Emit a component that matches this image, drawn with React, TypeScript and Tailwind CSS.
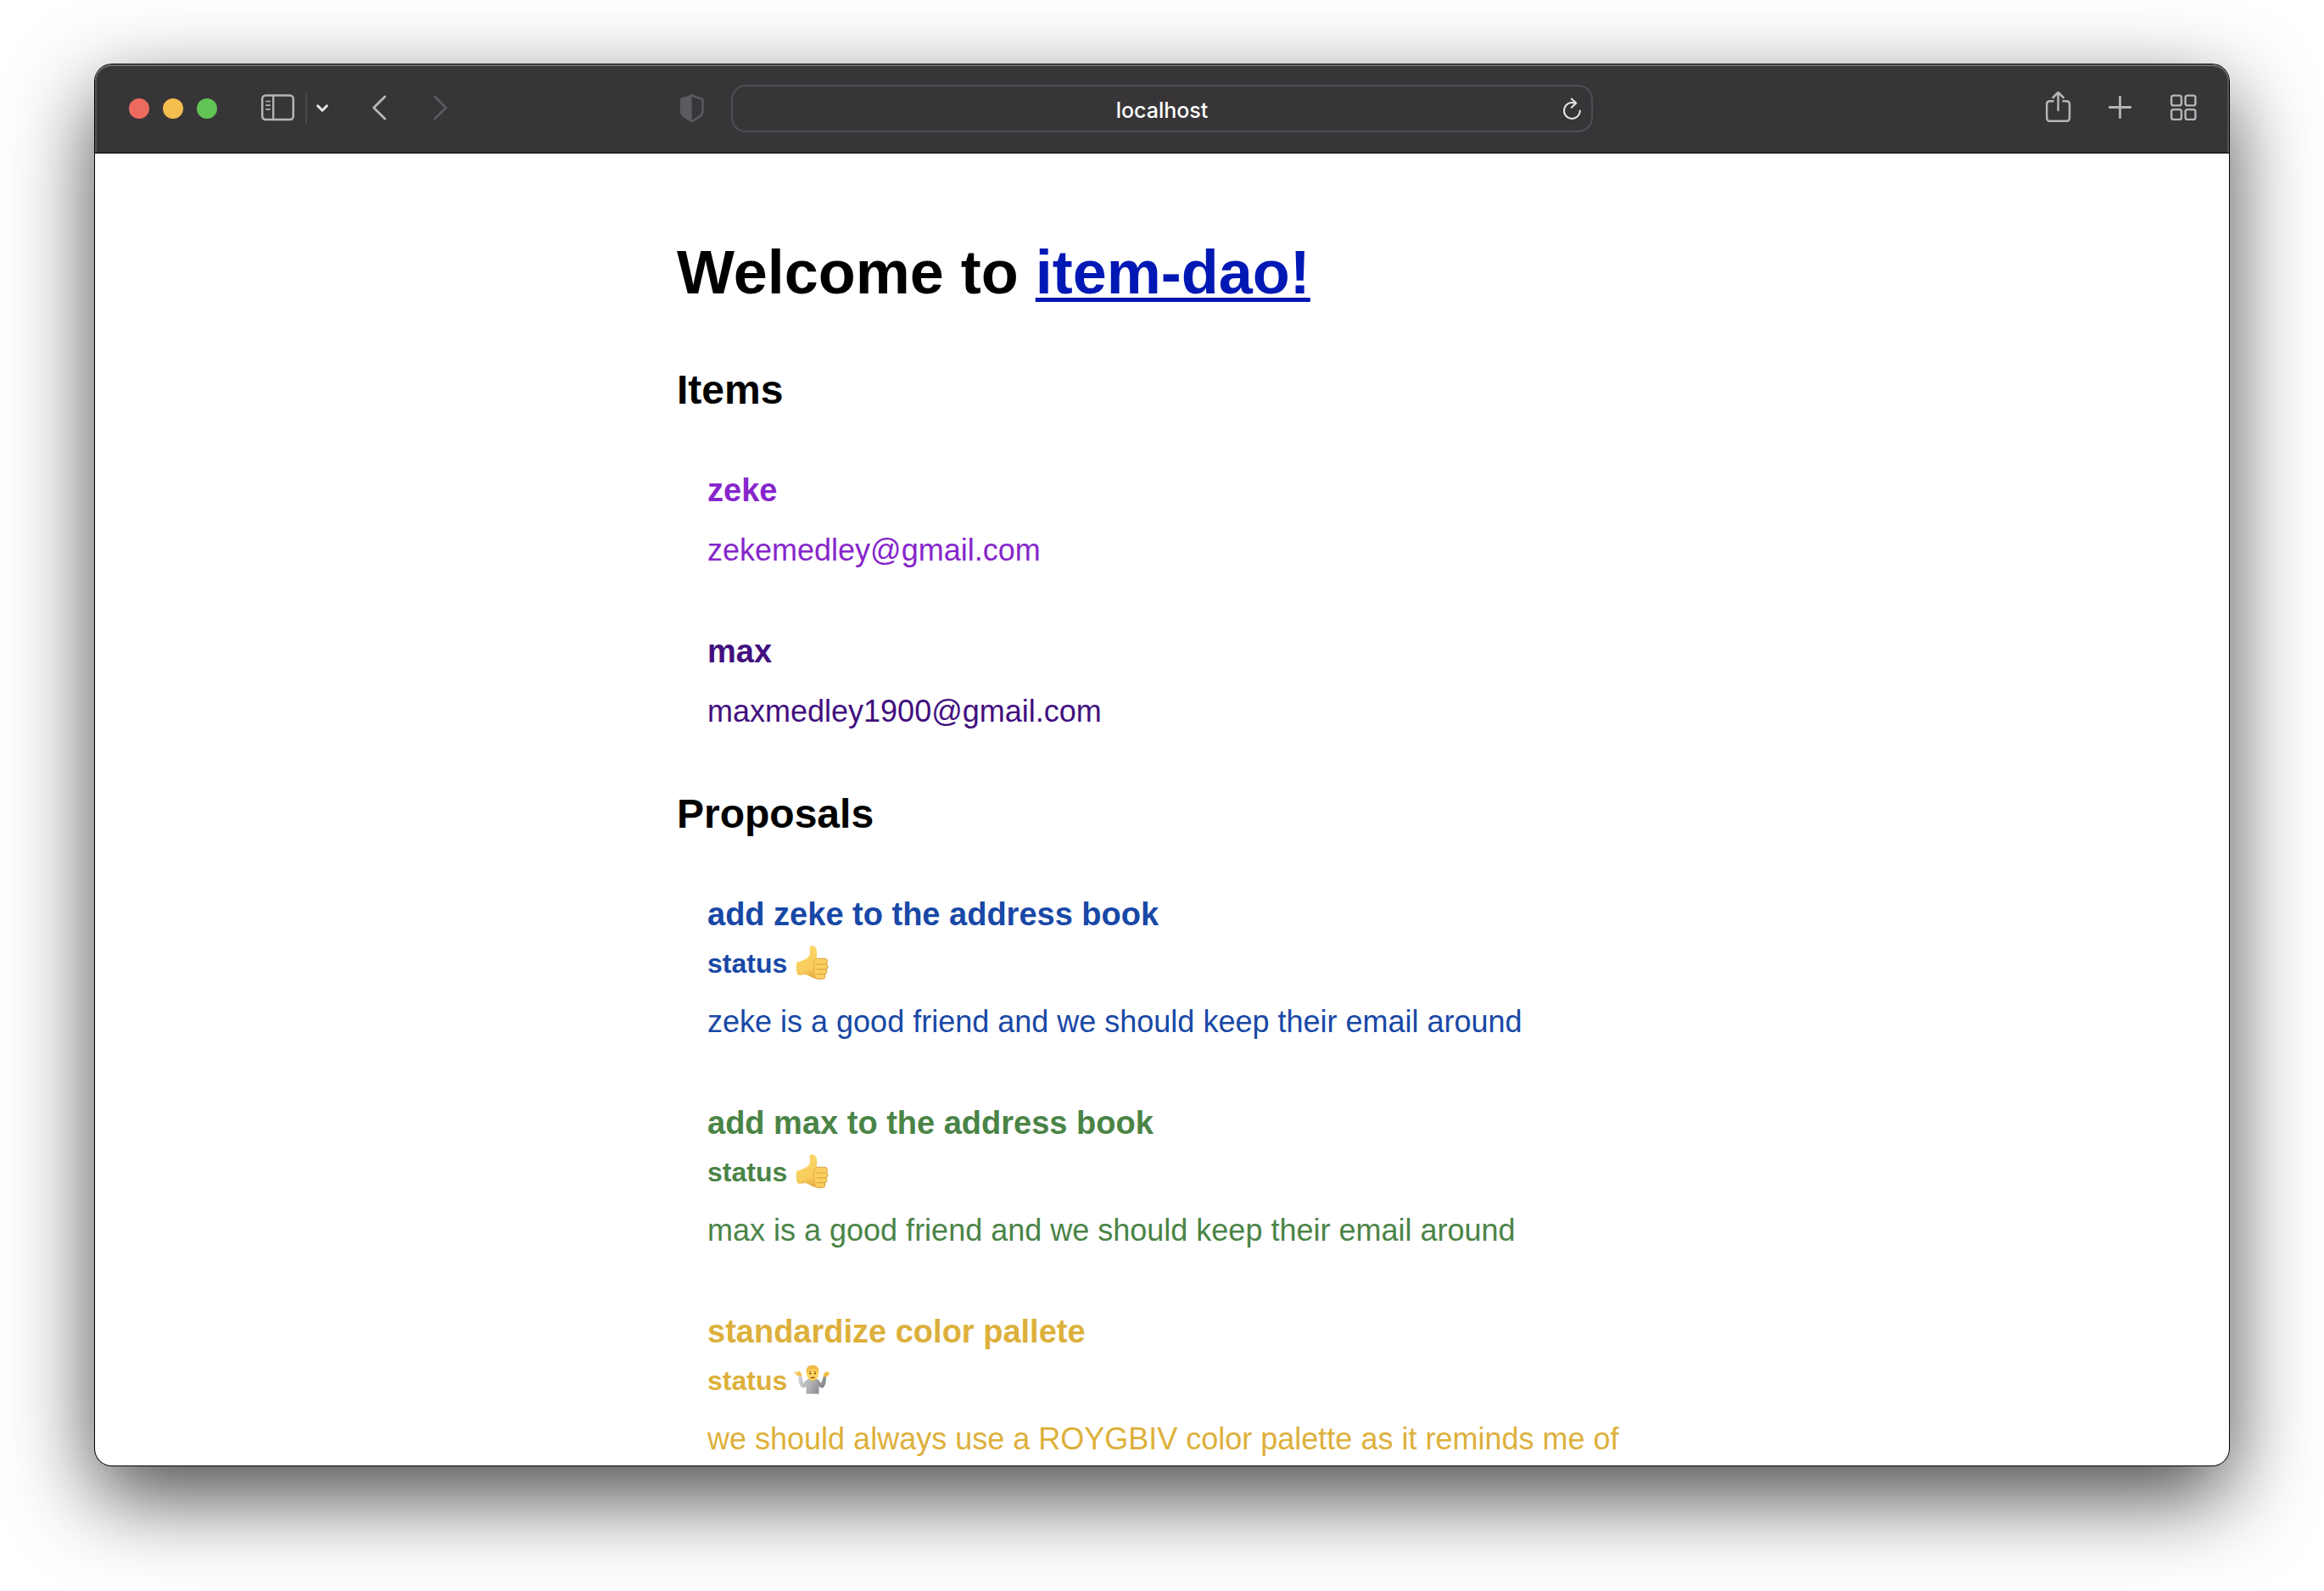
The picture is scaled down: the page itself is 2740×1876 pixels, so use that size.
import React from "react";

type Item = { name: string; detail: string; tone: string };
type Proposal = { title: string; status: "yes" | "unsure"; detail: string; tone: string };

const items: Item[] = [
  { name: "zeke", detail: "zekemedley@gmail.com", tone: "text-[#8626cc]" },
  { name: "max", detail: "maxmedley1900@gmail.com", tone: "text-[#420f7e]" },
];

const proposals: Proposal[] = [
  {
    title: "add zeke to the address book",
    status: "yes",
    detail: "zeke is a good friend and we should keep their email around",
    tone: "text-[#1848a6]",
  },
  {
    title: "add max to the address book",
    status: "yes",
    detail: "max is a good friend and we should keep their email around",
    tone: "text-[#4a8446]",
  },
  {
    title: "standardize color pallete",
    status: "unsure",
    detail: "we should always use a ROYGBIV color palette as it reminds me of",
    tone: "text-[#ddb03b]",
  },
];

function ThumbsUp() {
  return (
    <svg className="h-11 w-11" viewBox="0 0 44 44" role="img" aria-label="thumbs up">
      <defs>
        <linearGradient id="thumbSkin" x1="0" y1="0" x2="0.3" y2="1">
          <stop offset="0" stopColor="#fbd769" />
          <stop offset="0.75" stopColor="#f8cd5c" />
          <stop offset="1" stopColor="#e6ad45" />
        </linearGradient>
      </defs>
      <path
        d="M3.500 20.500C2.200 25 2.400 30.500 4 34.500C7 37.500 10 34.500 14 35C19 36.500 22 40.500 30 40.300L35 39.500L38 22L27 19.500C26.500 14 28 10 26.500 5C25.600 1.300 19.500 -0.200 18.600 3C18.200 6 19.800 9 18.500 12C17 15.500 12.500 18.500 3.500 20.500Z"
        fill="url(#thumbSkin)"
      />
      <g fill="#f9cf60" stroke="#cf9838" strokeWidth="0.9">
        <rect x="24.500" y="33.800" width="12.500" height="6.500" rx="3.200" />
        <rect x="24" y="28.200" width="15" height="6.500" rx="3.200" />
        <rect x="24" y="22.200" width="16" height="6.800" rx="3.300" />
        <rect x="23.500" y="16.200" width="16" height="6.800" rx="3.300" />
      </g>
      <path d="M20.500 16.500C22 16 24 16 26.500 16.200L27 37.500C24 38 22.500 36.500 23 32.500Z" fill="#f9cf60" />
      <path d="M26 17.500C23.500 19 23 21 24 23.500C23 27 24 32 25 37" fill="none" stroke="#d9a33f" strokeWidth="0.9" />
    </svg>
  );
}

function Shrug() {
  return (
    <svg className="h-11 w-11" viewBox="0 -3 44 44" role="img" aria-label="person shrugging">
      <defs>
        <linearGradient id="shirt" x1="0" y1="0" x2="1" y2="0.300">
          <stop offset="0" stopColor="#d4d5d7" />
          <stop offset="0.500" stopColor="#b3b4b7" />
          <stop offset="1" stopColor="#85878a" />
        </linearGradient>
      </defs>
      <path
        d="M5.500 13.500L9 13C10 17 10.500 20 11.500 22C14 17.500 17 16.500 22 16.500C27 16.500 30 17.500 32 22C33 20 34 17 35 13.500L38 14C38 20 37 26 34 27.500C31.500 28 30.500 26.500 29.500 25.500L29.500 34.500H14.500L14.500 25.500C13 27.500 11.500 28 9.500 27C6 24.500 5 19 5.500 13.500Z"
        fill="url(#shirt)"
      />
      <path d="M5 13.500C2.500 12 1 10 1 8C2.500 8 3.500 10 5 10C5 8.500 4 7 5.300 7.100C7 9 9.500 10.500 9.500 13.500Z" fill="#f3bd45" />
      <path d="M34.500 14C34.500 11 36.500 9.500 39.500 7.800C40.500 8.500 39.500 9.200 38.800 9.800L41.500 9C42.500 10.500 40.500 14 38 14.500Z" fill="#f3bd45" />
      <path d="M18.500 15H25.500V18Q22 20.500 18.500 18Z" fill="#e5ab40" />
      <ellipse cx="22" cy="10.500" rx="7" ry="8.500" fill="#fcd45a" />
      <path d="M14.700 10C13.800 4 16.800 0.800 22 0.800C27.200 0.800 30.200 4 29.300 10L28.600 11C28.600 7.500 27.500 5.500 25 5C20.500 6 18 4.500 16.800 6.500C16 8 15.700 9.500 15.400 11Z" fill="#f2bb48" />
      <circle cx="19.300" cy="10.500" r="1" fill="#5a3517" />
      <circle cx="25" cy="10.500" r="1" fill="#5a3517" />
      <path d="M17.800 8.200L20.500 7.900M23.800 7.900L26.300 8.200" stroke="#9a6420" strokeWidth="0.800" />
      <path d="M20.300 15.700Q22.200 14.500 24 15.700" fill="none" stroke="#8e3f22" strokeWidth="1.400" strokeLinecap="round" />
    </svg>
  );
}

function Toolbar() {
  return (
    <header className="grid h-[105px] grid-cols-[1fr_1016px_1fr] items-center rounded-t-[20px] border-b border-black bg-[#373538] shadow-[inset_0_2px_0_#6b6b6c,inset_2px_0_0_#545355,inset_-2px_0_0_#545355]">
      <div className="flex items-center pr-[30px] pl-10">
        <div className="flex gap-4">
          <button aria-label="Close" className="size-6 rounded-full bg-[#ed6a5e]" />
          <button aria-label="Minimize" className="size-6 rounded-full bg-[#f5bd4f]" />
          <button aria-label="Zoom" className="size-6 rounded-full bg-[#61c454]" />
        </div>
        <button aria-label="Show sidebar" className="ml-12">
          <svg className="h-11 w-12" viewBox="0 0 48 44" fill="none" stroke="#b7b5b8" strokeLinecap="round">
            <rect x="5.200" y="6.500" width="36.600" height="28.600" rx="4" strokeWidth="2.500" />
            <path d="M18.200 7V35" strokeWidth="2.300" />
            <path d="M9.800 13.500H14.200M9.800 18.200H14.200M9.800 22.800H14.200" strokeWidth="1.700" />
          </svg>
        </button>
        <div className="ml-2 h-9 w-0.5 bg-[#4a484b]" />
        <button aria-label="Tab groups" className="ml-1.5">
          <svg className="h-11 w-6" viewBox="0 0 24 44" fill="none" stroke="#e4e3e5" strokeWidth="3" strokeLinecap="round" strokeLinejoin="round">
            <path d="M6.600 18.800L12 24.300L17.400 18.800" />
          </svg>
        </button>
        <button aria-label="Back" className="ml-10">
          <svg className="h-11 w-8" viewBox="0 0 32 44" fill="none" stroke="#b7b5b8" strokeWidth="2.800" strokeLinecap="round" strokeLinejoin="round">
            <path d="M21.800 8L8.600 21L21.800 34" />
          </svg>
        </button>
        <button aria-label="Forward" className="ml-10">
          <svg className="h-11 w-8" viewBox="0 0 32 44" fill="none" stroke="#5c5a5e" strokeWidth="2.800" strokeLinecap="round" strokeLinejoin="round">
            <path d="M8.600 8L21.800 21L8.600 34" />
          </svg>
        </button>
        <button aria-label="Privacy report" className="ml-auto">
          <svg className="h-11 w-8" viewBox="0 0 32 44" fill="none" stroke="#5c5a5e" strokeWidth="2.400" strokeLinejoin="round">
            <path d="M15.700 6.200C18.500 8 23 9.300 28.400 10.600V25.500C28.400 30.500 22 33.500 15.700 37C9.500 33.500 3.100 30.500 3.100 25.500V10.600C8.500 9.300 13 8 15.700 6.200Z" />
            <path d="M15.700 6.200V37C9.500 33.500 3.100 30.500 3.100 25.500V10.600C8.500 9.300 13 8 15.700 6.200Z" fill="#5c5a5e" stroke="none" />
          </svg>
        </button>
      </div>
      <div className="relative">
        <input
          aria-label="Address"
          defaultValue="localhost"
          className="block h-14 w-full rounded-[17px] border-2 border-[#504e52] bg-transparent px-12 pt-1 text-center font-['Inter',sans-serif] text-[25px] font-medium text-white outline-none"
        />
        <button aria-label="Reload" className="absolute top-1.5 right-2">
          <svg className="h-11 w-8" viewBox="0 0 32 44" fill="none" stroke="#e4e3e5" strokeWidth="2" strokeLinecap="round" strokeLinejoin="round">
            <path d="M24.800 24.500A9.400 9.400 0 1 1 18.500 15.600" />
            <path d="M14.800 10.500L20.300 15.600L14.800 20.800" />
          </svg>
        </button>
      </div>
      <div className="flex items-center justify-end gap-[38px] pr-9">
        <button aria-label="Share">
          <svg className="h-11 w-9" viewBox="0 0 36 44" fill="none" stroke="#b7b5b8" strokeWidth="2.500" strokeLinecap="round" strokeLinejoin="round">
            <path d="M13.600 13.200H9Q5.200 13.200 5.200 17V33Q5.200 36.800 9 36.800H28.200Q32 36.800 32 33V17Q32 13.200 28.200 13.200H23.600" strokeLinecap="butt" />
            <path d="M18.600 24V3M12.500 9L18.600 2.800L24.700 9" />
          </svg>
        </button>
        <button aria-label="New tab">
          <svg className="h-11 w-9" viewBox="0 0 36 44" fill="none" stroke="#b7b5b8" strokeWidth="2.800" strokeLinecap="round">
            <path d="M17.500 8.300V32.700M5.300 20.500H29.700" />
          </svg>
        </button>
        <button aria-label="Tab overview">
          <svg className="h-11 w-9" viewBox="0 0 36 44" fill="none" stroke="#b7b5b8" strokeWidth="2.400">
            <rect x="4.100" y="6.600" width="11.800" height="11.800" rx="2.500" />
            <rect x="20.600" y="6.600" width="11.800" height="11.800" rx="2.500" />
            <rect x="4.100" y="23.100" width="11.800" height="11.800" rx="2.500" />
            <rect x="20.600" y="23.100" width="11.800" height="11.800" rx="2.500" />
          </svg>
        </button>
      </div>
    </header>
  );
}

export default function App() {
  return (
    <div className="flex min-h-screen flex-col bg-white px-28 pt-[76px] pb-[148px] font-['Liberation_Sans',Arial,sans-serif]">
      <div className="flex flex-1 flex-col rounded-[20px] bg-white shadow-[0_0_0_1px_#000,0_36px_100px_rgba(0,0,0,0.72)]">
        <Toolbar />
        <main className="mx-auto w-full max-w-[1144px] pt-[100px]">
          <h1 className="text-[72px] leading-[80px] font-bold text-black">
            Welcome to{" "}
            <a href="#item-dao" className="text-[#0018b4] underline decoration-[5px] underline-offset-[5px]">
              item-dao!
            </a>
          </h1>

          <h2 className="mt-[71px] text-[48px] leading-[56px] font-bold text-black">Items</h2>
          <ul className="mt-[68px] flex flex-col gap-[77px] pl-9">
            {items.map((item) => (
              <li key={item.name} className={item.tone}>
                <h3 className="text-[38px] leading-[44px] font-bold">{item.name}</h3>
                <p className="mt-[29px] text-[36px] leading-[40px]">{item.detail}</p>
              </li>
            ))}
          </ul>

          <h2 className="mt-[73px] text-[48px] leading-[56px] font-bold text-black">Proposals</h2>
          <ul className="mt-[68px] flex flex-col gap-[77px] pl-9">
            {proposals.map((proposal) => (
              <li key={proposal.title} className={proposal.tone}>
                <h3 className="text-[38px] leading-[44px] font-bold">{proposal.title}</h3>
                <h4 className="mt-4 flex h-10 items-center gap-2 text-[32px] leading-[40px] font-bold">
                  status
                  {proposal.status === "yes" ? <ThumbsUp /> : <Shrug />}
                </h4>
                <p className="mt-[29px] text-[36px] leading-[40px]">{proposal.detail}</p>
              </li>
            ))}
          </ul>
        </main>
      </div>
    </div>
  );
}
